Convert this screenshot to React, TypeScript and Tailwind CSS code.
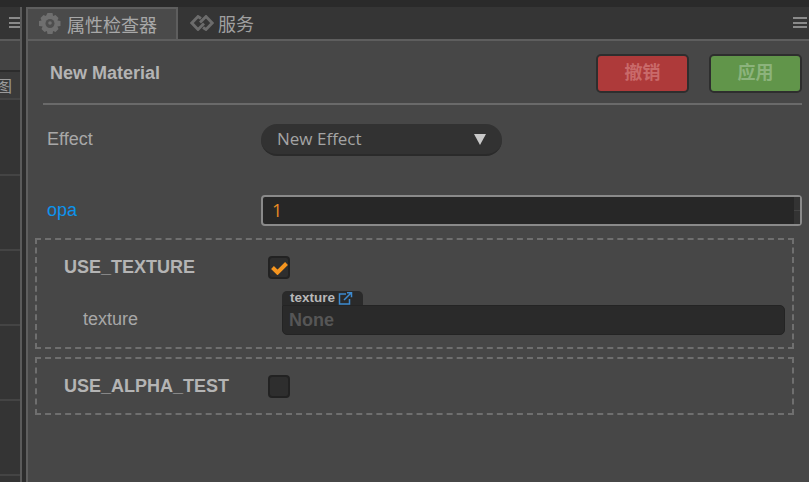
const sans = "font-['Liberation_Sans','Noto_Sans_CJK_SC',sans-serif]";

function Burger({ className }: { className: string }) {
  return (
    <div className={`flex flex-col gap-[2.5px] ${className}`}>
      <div className="h-[2px] bg-[#8a8a8a]" />
      <div className="h-[2px] bg-[#8a8a8a]" />
      <div className="h-[2px] bg-[#8a8a8a]" />
    </div>
  );
}

function GearIcon() {
  return (
    <svg width="22" height="22" viewBox="0 0 22 22" className="shrink-0">
      <path
        fill="#6f6f6f"
        d="M8.500 0h5l.6 3 2.400-1 3 3-1.100 2.400 3.100.6v5l-3.100.6 1.100 2.400-3 3-2.400-1-.6 3.100h-5l-.6-3.100-2.400 1-3-3 1.100-2.400L-.5 13V8l3.100-.6L1.500 5l3-3 2.400 1z"
      />
      <circle cx="11" cy="10.500" r="4.500" fill="#4e4e4e" />
      <circle cx="11" cy="10" r="1.800" fill="#707070" />
    </svg>
  );
}

function ServiceIcon() {
  return (
    <svg width="24" height="16" viewBox="0 0 24 16" fill="none" stroke="#6c6c6c" strokeWidth="2.800" className="shrink-0">
      <path d="M11 3.500 8 1.500 1.800 8 8 14.500l6-6" />
      <path d="M13 12.500l3 2L22.200 8 16 1.500l-6 6" />
    </svg>
  );
}

function SideRow({ h }: { h: string }) {
  return <div className={`${h} shrink-0 border-b-2 border-[#444444] bg-[#343434]`} />;
}

function Group({ className, children }: { className: string; children: React.ReactNode }) {
  return (
    <div className={`ml-[7px] mr-[15px] shrink-0 border-2 border-dashed border-[#6f6f6f] ${className}`}>{children}</div>
  );
}

export default function App() {
  return (
    <div className={`flex h-[482px] w-[809px] flex-col overflow-hidden bg-[#2c2c2c] ${sans}`}>
      <div className="h-[7px] shrink-0 bg-[#2a2a2a]" />
      <div className="flex min-h-0 flex-1">
        {/* left panel, only its edge is visible */}
        <div className="flex w-[22px] shrink-0 flex-col border-r-2 border-[#5a5a5a]">
          <div className="flex h-[32px] shrink-0 items-start justify-end bg-[#343434] pt-[10px]">
            <Burger className="w-[11px]" />
          </div>
          <div className="h-[33px] shrink-0 border-t-2 border-b-2 border-t-[#5a5a5a] border-b-[#2c2c2c] bg-[#434343]" />
          <div className="flex h-[28px] shrink-0 items-center overflow-hidden border-b-2 border-[#444444] bg-[#3a3a3a] pt-[3px]">
            <span className="-ml-[4px] shrink-0 text-[16px] leading-none text-[#9a9a9a]">图</span>
          </div>
          <SideRow h="h-[76px]" />
          <SideRow h="h-[75px]" />
          <SideRow h="h-[75px]" />
          <SideRow h="h-[75px]" />
          <SideRow h="h-[75px]" />
          <div className="flex-1 bg-[#343434]" />
        </div>

        <div className="w-[4px] shrink-0 bg-[#2c2c2c]" />

        {/* inspector */}
        <div className="flex min-w-0 flex-1 flex-col">
          <div className="flex h-[32px] shrink-0 bg-[#353535]">
            <div className="flex w-[152px] items-center border-2 border-b-0 border-[#5e5e5e] bg-[#4a4a4a] pl-[11px]">
              <GearIcon />
              <span className="mt-[3px] ml-[6px] text-[18px] leading-none text-[#a8a8a8]">属性检查器</span>
            </div>
            <div className="flex items-center pl-[12px]">
              <ServiceIcon />
              <span className="mt-[3px] ml-[4px] text-[18px] leading-none text-[#a0a0a0]">服务</span>
            </div>
            <div className="flex-1" />
            <Burger className="mr-[2px] mt-[10px] h-[11px] w-[14px]" />
          </div>

          <div className="flex min-h-0 flex-1 flex-col border-t-2 border-l-2 border-[#5e5e5e] bg-[#474747]">
            <div className="flex h-[62px] shrink-0 items-center justify-between pl-[22px] pr-[7px] pt-[2px]">
              <span className="text-[18px] font-bold text-[#b4b4b4]">New Material</span>
              <div className="flex gap-[20px]">
                <button className="flex h-[39px] w-[93px] items-center justify-center rounded-[5px] border-2 border-[#2e2e2e] bg-[#ae3a3a] text-[18px] font-bold text-[#c96a6a]">
                  撤销
                </button>
                <button className="flex h-[39px] w-[93px] items-center justify-center rounded-[5px] border-2 border-[#2e2e2e] bg-[#61954a] text-[18px] font-bold text-[#8cb37c]">
                  应用
                </button>
              </div>
            </div>
            <div className="ml-[15px] mr-[7px] h-[2px] shrink-0 bg-[#6a6a6a]" />

            <div className="mt-[19px] flex h-[32px] shrink-0 items-center">
              <span className="ml-[19px] w-[214px] pb-[1px] text-[18px] text-[#a8a8a8]">Effect</span>
              <div className="flex h-[32px] w-[241px] items-center justify-between rounded-[16px] border-b-2 border-[#2a2a2a] bg-[#323232] px-[16px]">
                <span className="pb-[1px] font-['Open_Sans','Noto_Sans',sans-serif] text-[17px] text-[#a4a4a4]">New Effect</span>
                <svg width="12" height="11" viewBox="0 0 12 11">
                  <path d="M0 0h12L6 11z" fill="#c8c8c8" />
                </svg>
              </div>
            </div>

            <div className="mt-[39px] flex h-[31px] shrink-0 items-center">
              <span className="ml-[19px] w-[214px] pb-[1px] text-[18px] text-[#0c93ec]">opa</span>
              <div className="flex h-[31px] w-[541px] items-center justify-between rounded-[4px] border-2 border-[#8a8a8a] bg-[#272727] pl-[9px]">
                <span className="font-['Open_Sans','Noto_Sans',sans-serif] text-[18px] text-[#e88b22]">1</span>
                <div className="flex h-full w-[6px] flex-col bg-[#333333]">
                  <div className="flex-1 border-b border-[#444444]" />
                  <div className="flex-1" />
                </div>
              </div>
            </div>

            <Group className="mt-[12px] h-[111px]">
              <div className="flex h-[51px] items-center pt-[4px]">
                <span className="ml-[27px] w-[204px] text-[18px] font-bold text-[#b4b4b4]">USE_TEXTURE</span>
                <div className="flex h-[23px] w-[22px] items-center justify-center rounded-[4px] border-2 border-[#222222] bg-[#2e2e2e]">
                  <svg width="17" height="14" viewBox="0 0 17 14" fill="none" stroke="#f5951f" strokeWidth="4">
                    <path d="M1.500 6.500 6.500 11.500 15.500 2.500" />
                  </svg>
                </div>
              </div>
              <div className="flex items-start">
                <span className="mt-[15px] ml-[46px] w-[199px] text-[18px] text-[#a8a8a8]">texture</span>
                <div className="flex h-[44px] w-[503px] flex-col">
                  <div className="flex h-[14px] w-[81px] items-center gap-[3px] rounded-t-[5px] bg-[#2a2a2a] pl-[8px]">
                    <span className="text-[13.500px] leading-none font-bold text-[#b8b8b8]">texture</span>
                    <svg width="15" height="13" viewBox="0 0 15 13" fill="none" stroke="#3d8ad0" strokeWidth="1.500">
                      <path d="M8 2H1.500v10h10V7" />
                      <path d="M6 8l7-7M9 .8h4.500v4.500" />
                    </svg>
                  </div>
                  <div className="flex h-[30px] items-center rounded-b-[5px] rounded-tr-[5px] border border-[#242424] bg-[#2a2a2a] pl-[6px]">
                    <span className="text-[18px] font-bold text-[#565656]">None</span>
                  </div>
                </div>
              </div>
            </Group>

            <Group className="mt-[8px] h-[58px]">
              <div className="flex h-full items-center">
                <span className="ml-[27px] w-[204px] text-[18px] font-bold text-[#b4b4b4]">USE_ALPHA_TEST</span>
                <div className="h-[23px] w-[22px] rounded-[4px] border-2 border-[#222222] bg-[#2e2e2e]" />
              </div>
            </Group>
          </div>
        </div>
      </div>
    </div>
  );
}
